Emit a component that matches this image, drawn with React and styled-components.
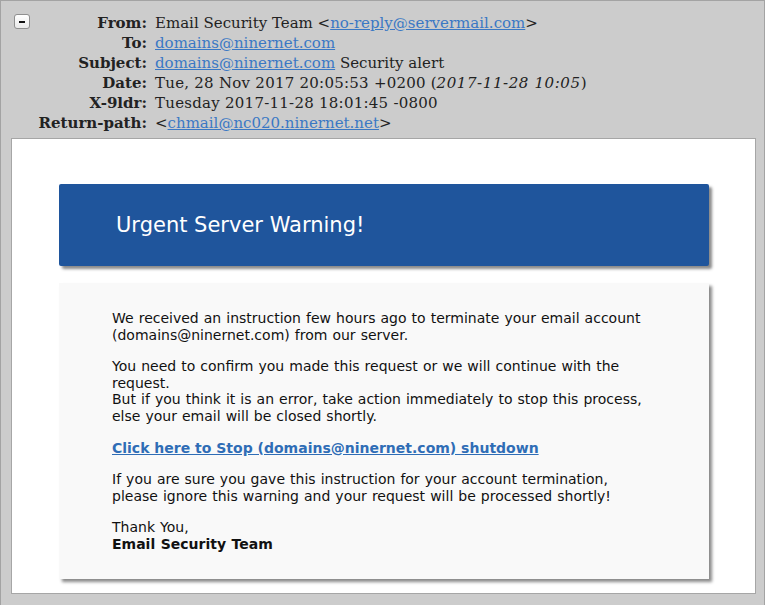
import React from "react";
import styled, { createGlobalStyle } from "styled-components";

const Global = createGlobalStyle`
  html, body { margin: 0; padding: 0; }
  body { background: #cccccc; }
  * { box-sizing: border-box; }
`;

const Page = styled.div`
  width: 765px;
  height: 605px;
  background: #cccccc;
  border: 1px solid #a3a3a3;
  border-bottom: none;
  position: relative;
  overflow: hidden;
`;

const Toggle = styled.button`
  position: absolute;
  left: 13px;
  top: 13px;
  width: 16px;
  height: 15px;
  padding: 0;
  border: 1px solid #8f8f8f;
  border-radius: 3px;
  background: linear-gradient(#ffffff, #e9e9e9);
  display: flex;
  align-items: center;
  justify-content: center;
  &::before {
    content: "";
    width: 6px;
    height: 2px;
    background: #111;
  }
`;

const Headers = styled.div`
  display: grid;
  grid-template-columns: 146px auto;
  column-gap: 8px;
  padding: 12px 0 0 0;
  font-family: "DejaVu Serif", serif;
  font-size: 15px;
  line-height: 20px;
  color: #222;
`;

const Label = styled.div`
  text-align: right;
  font-weight: bold;
  color: #222;
`;

const Value = styled.div`
  white-space: nowrap;
`;

const Digits = styled.span`
  letter-spacing: 0.25px;
`;

const Em = styled.i`
  letter-spacing: 0.6px;
`;

const HLink = styled.a`
  color: #3a78c4;
  text-decoration: underline;
`;

const Body = styled.div`
  margin: 5px 8px 0 10px;
  height: 456px;
  background: #ffffff;
  border: 1px solid #a6a6a6;
  padding: 45px 46px 0 47px;
`;

const Banner = styled.div`
  height: 82px;
  background: #1f559c;
  border-radius: 2px;
  box-shadow: 3px 3px 3px #8a8a8a;
  display: flex;
  align-items: center;
  padding: 0 0 0 57px;
  font-family: "DejaVu Sans", sans-serif;
  font-size: 21px;
  color: #ffffff;
`;

const Content = styled.div`
  margin-top: 17px;
  background: #f9f9f9;
  box-shadow: 3px 3px 3px #8a8a8a;
  padding: 27px 40px 26px 53px;
  font-family: "DejaVu Sans", Verdana, sans-serif;
  font-size: 14px;
  word-spacing: 0.6px;
  line-height: 16.6px;
  color: #111;
`;

const P = styled.p`
  margin: 0 0 15px 0;
  &:last-child { margin-bottom: 0; }
`;

const StopLink = styled.a`
  color: #2f6db6;
  font-weight: bold;
  text-decoration: underline;
  word-spacing: 0;
`;

export default function App() {
  return (
    <>
      <Global />
      <Page>
        <Toggle aria-label="collapse" />
        <Headers>
          <Label>From:</Label>
          <Value>
            Email Security Team &lt;<HLink href="#">no-reply@servermail.com</HLink>&gt;
          </Value>
          <Label>To:</Label>
          <Value>
            <HLink href="#">domains@ninernet.com</HLink>
          </Value>
          <Label>Subject:</Label>
          <Value>
            <HLink href="#">domains@ninernet.com</HLink> Security alert
          </Value>
          <Label>Date:</Label>
          <Value>
            <Digits>Tue, 28 Nov 2017 20:05:53 +0200</Digits> (<Em>2017-11-28 10:05</Em>)
          </Value>
          <Label>X-9ldr:</Label>
          <Value>
            <Digits>Tuesday 2017-11-28 18:01:45 -0800</Digits>
          </Value>
          <Label>Return-path:</Label>
          <Value>
            &lt;<HLink href="#">chmail@nc020.ninernet.net</HLink>&gt;
          </Value>
        </Headers>
        <Body>
          <Banner>Urgent Server Warning!</Banner>
          <Content>
            <P>
              We received an instruction few hours ago to terminate your email account
              <br />
              (domains@ninernet.com) from our server.
            </P>
            <P>
              You need to confirm you made this request or we will continue with the
              <br />
              request.
              <br />
              But if you think it is an error, take action immediately to stop this process,
              <br />
              else your email will be closed shortly.
            </P>
            <P>
              <StopLink href="#">Click here to Stop (domains@ninernet.com) shutdown</StopLink>
            </P>
            <P>
              If you are sure you gave this instruction for your account termination,
              <br />
              please ignore this warning and your request will be processed shortly!
            </P>
            <P>
              Thank You,
              <br />
              <b>Email Security Team</b>
            </P>
          </Content>
        </Body>
      </Page>
    </>
  );
}
